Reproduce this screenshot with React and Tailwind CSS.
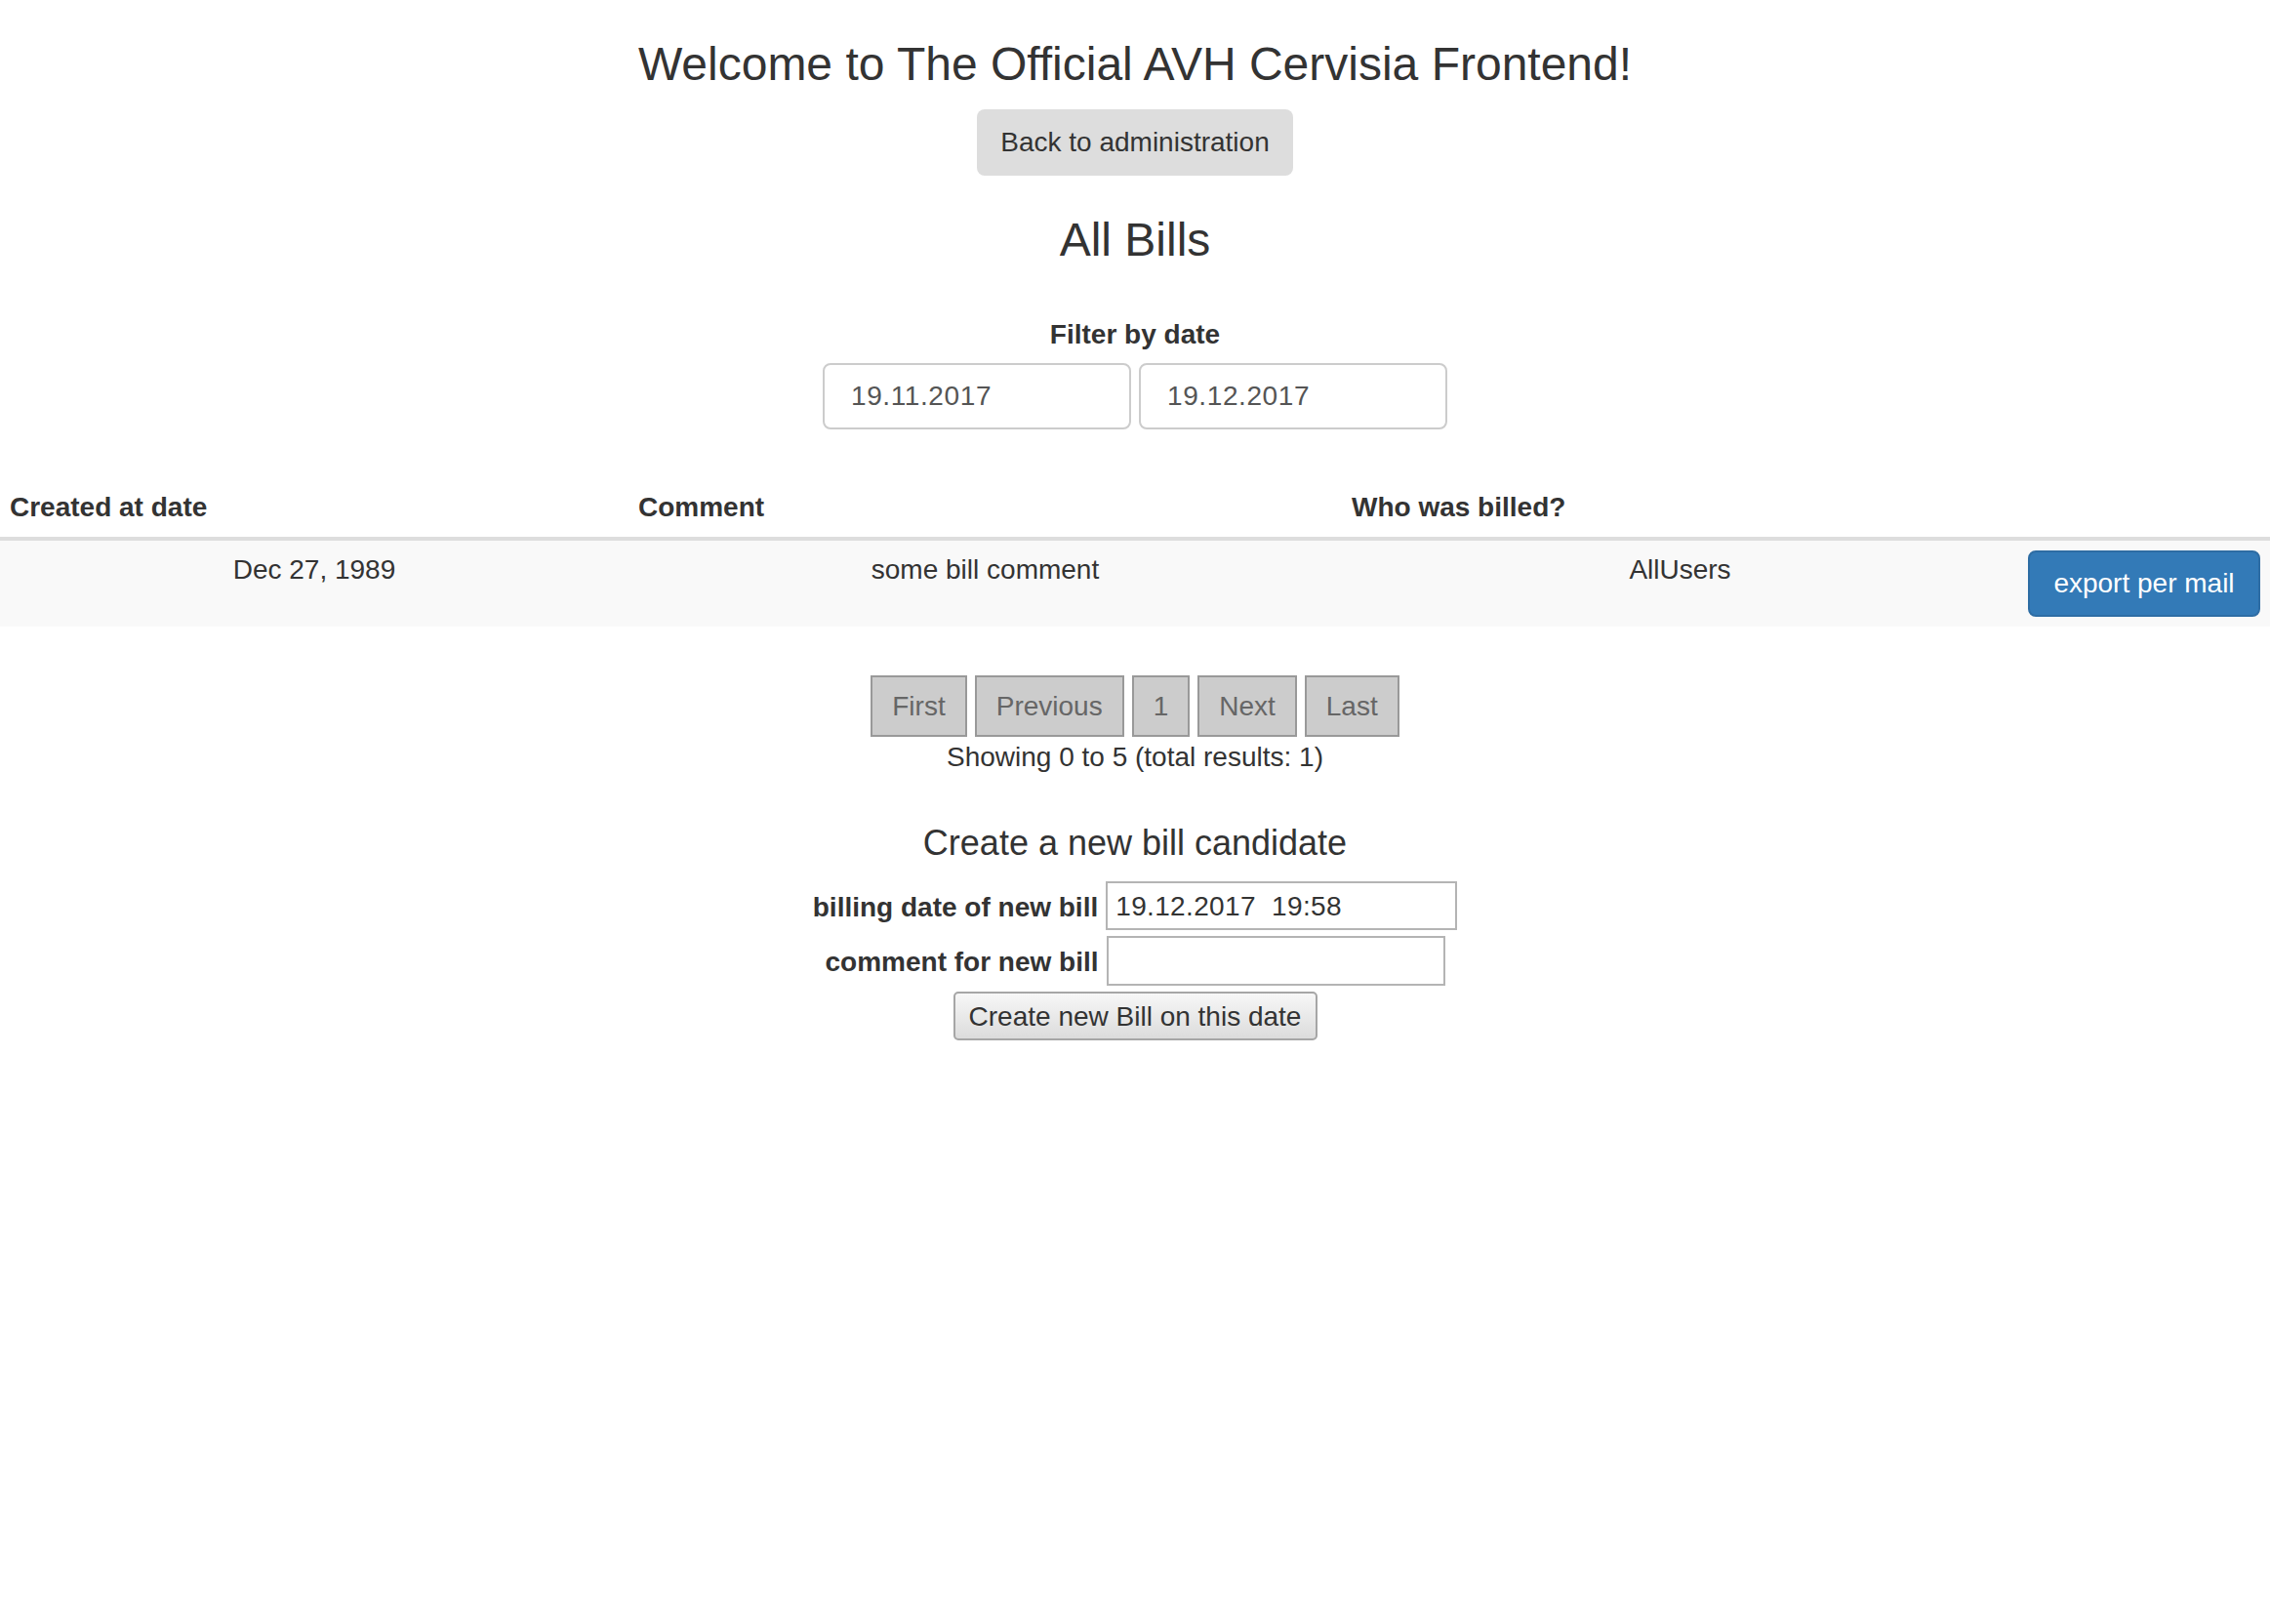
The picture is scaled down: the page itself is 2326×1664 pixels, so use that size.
import React, { useState } from "react";

// --- DATOS ---
const BILLS = [
  { id: 1, createdAt: "Dec 27, 1989", comment: "some bill comment", billed: "AllUsers" },
];

const PAGES = ["First", "Previous", "1", "Next", "Last"];

export default function App() {
  const [from, setFrom] = useState("19.11.2017");
  const [to, setTo] = useState("19.12.2017");
  const [billDate, setBillDate] = useState("19.12.2017  19:58");
  const [comment, setComment] = useState("");

  return (
    <div className="min-h-screen bg-white font-['Liberation_Sans',Arial,sans-serif] text-[28px] leading-[40px] text-[#333]">
      {/* CABECERA */}
      <div className="flex flex-col items-center">
        <h1 className="mt-[40px] mb-[19px] text-[48px] leading-[52.8px]">
          Welcome to The Official AVH Cervisia Frontend!
        </h1>
        <button className="h-[68px] px-[24px] rounded-[8px] bg-[#dddddd] text-[#333]">
          Back to administration
        </button>

        <h2 className="mt-[40px] mb-[20px] text-[48px] leading-[52.8px]">All Bills</h2>

        <label className="mt-[30px] font-bold">Filter by date</label>
        <div className="mt-[9px] flex gap-[8px]">
          <input
            value={from}
            onChange={(e) => setFrom(e.target.value)}
            className="w-[316px] h-[68px] pl-[27px] rounded-[8px] border-2 border-[#cccccc] text-[#555] tracking-[0.6px] outline-none"
          />
          <input
            value={to}
            onChange={(e) => setTo(e.target.value)}
            className="w-[316px] h-[68px] pl-[27px] rounded-[8px] border-2 border-[#cccccc] text-[#555] tracking-[0.6px] outline-none"
          />
        </div>
      </div>

      {/* TABLA */}
      <table className="mt-[50px] w-full table-fixed border-collapse">
        <colgroup>
          <col className="w-[644px]" />
          <col className="w-[731px]" />
          <col className="w-[693px]" />
          <col className="w-[258px]" />
        </colgroup>
        <thead>
          <tr className="border-b-4 border-[#dddddd]">
            <th className="p-[10px] text-left font-bold">Created at date</th>
            <th className="p-[10px] text-left font-bold">Comment</th>
            <th className="p-[10px] text-left font-bold">Who was billed?</th>
            <th className="p-[10px]"></th>
          </tr>
        </thead>
        <tbody>
          {BILLS.map((b) => (
            <tr key={b.id} className="bg-[#f9f9f9]">
              <td className="p-[10px] text-center align-top">{b.createdAt}</td>
              <td className="p-[10px] text-center align-top">{b.comment}</td>
              <td className="p-[10px] text-center align-top">{b.billed}</td>
              <td className="p-[10px] text-center align-top">
                <button className="h-[68px] px-[24px] rounded-[8px] border-2 border-[#2e6da4] bg-[#337ab7] text-white">
                  export per mail
                </button>
              </td>
            </tr>
          ))}
        </tbody>
      </table>

      {/* PAGINACION */}
      <div className="mt-[50px] flex justify-center gap-[8px]">
        {PAGES.map((p) => (
          <button
            key={p}
            className="h-[63px] px-[20px] pt-[2px] border-2 border-[#999999] bg-[#cccccc] text-[#666]"
          >
            {p}
          </button>
        ))}
      </div>
      <p className="mt-[1px] text-center">Showing 0 to 5 (total results: 1)</p>

      {/* NUEVA FACTURA */}
      <h4 className="mt-[48px] text-center text-[36px] leading-[39.6px]">Create a new bill candidate</h4>

      <div className="mt-[20px] flex justify-center items-center gap-[8px]">
        <label className="pt-[3px] font-bold">billing date of new bill</label>
        <input
          value={billDate}
          onChange={(e) => setBillDate(e.target.value)}
          className="w-[360px] h-[50px] pl-[8px] pt-[2px] border-2 border-[#b4b4b4] text-[#333] tracking-[0.35px] outline-none"
        />
      </div>
      <div className="mt-[6px] flex justify-center items-center gap-[8px]">
        <label className="pt-[3px] font-bold">comment for new bill</label>
        <input
          value={comment}
          onChange={(e) => setComment(e.target.value)}
          className="w-[347px] h-[51px] pl-[8px] border-2 border-[#b4b4b4] text-[#333] outline-none"
        />
      </div>
      <div className="mt-[6px] flex justify-center">
        <button className="w-[373px] h-[50px] pt-[2px] rounded-[5px] border-2 border-[#a6a6a6] bg-gradient-to-b from-[#f7f7f7] to-[#dcdcdc] text-[#333]">
          Create new Bill on this date
        </button>
      </div>
    </div>
  );
}
